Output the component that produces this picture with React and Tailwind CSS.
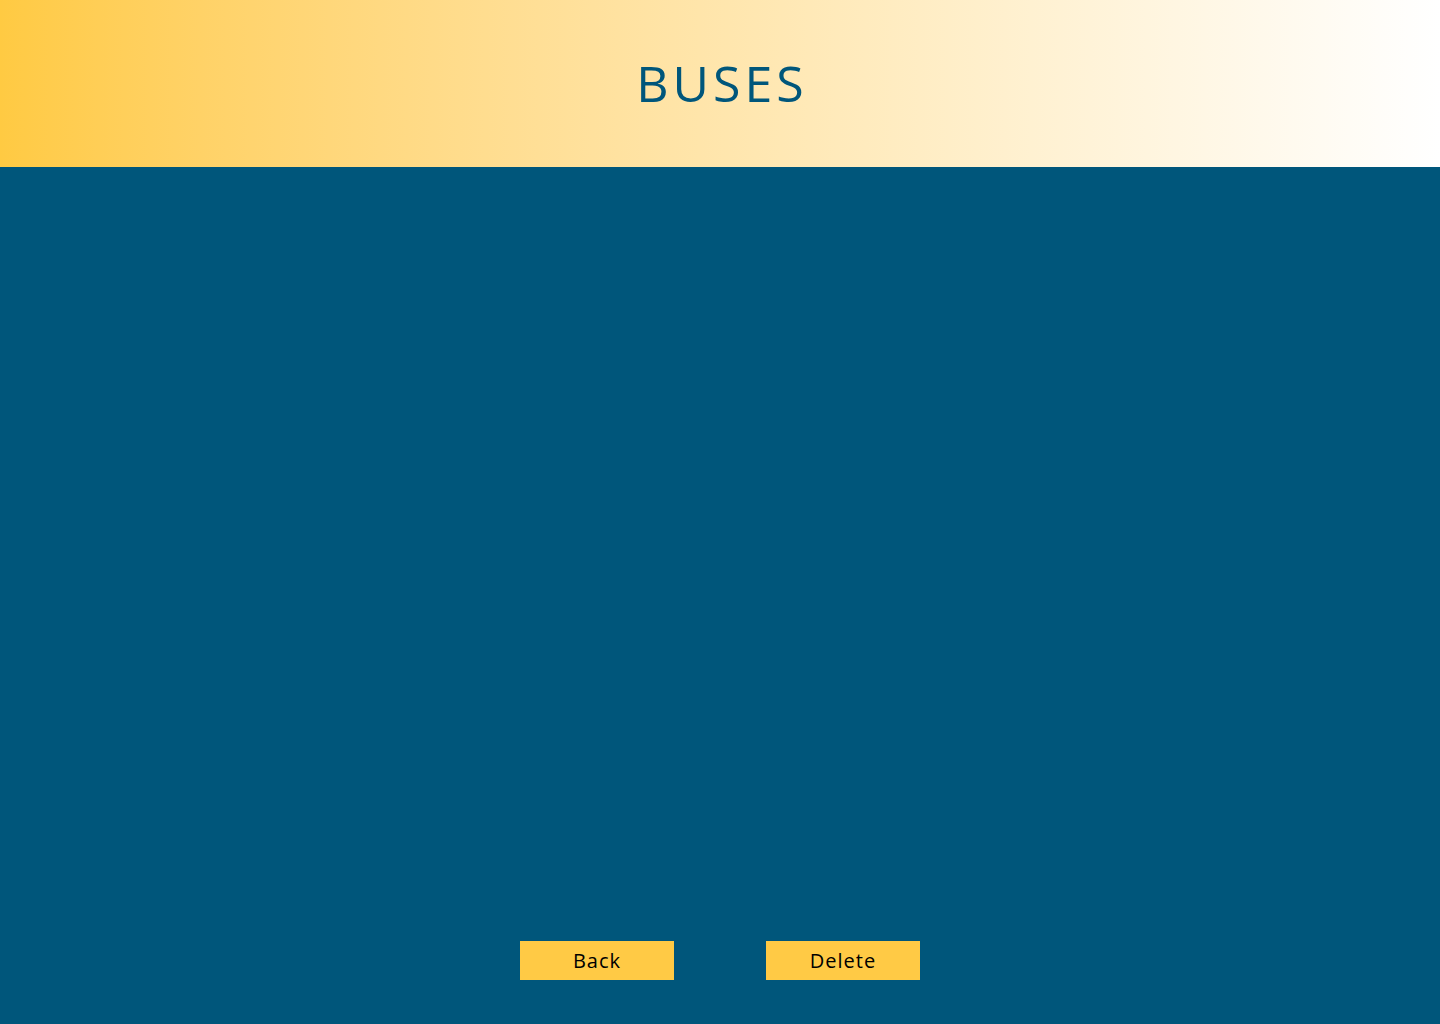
export default function App() {
  return (
    <div className="flex min-h-screen flex-col" style={{ fontFamily: '"Open Sans", "Noto Sans", sans-serif' }}>
      <header className="flex h-[167px] items-center justify-center bg-gradient-to-r from-[#ffca42] to-white">
        <h1 className="pl-[4px] text-[50px] font-normal tracking-[4px] text-[#00567b]">BUSES</h1>
      </header>
      <main className="flex flex-1 flex-col justify-end bg-[#00567b] pb-[44px]">
        <div className="flex justify-center gap-[92px]">
          <button className="h-[39px] w-[154px] bg-[#ffca45] text-[20px] tracking-[1px] text-black">Back</button>
          <button className="h-[39px] w-[154px] bg-[#ffca45] text-[20px] tracking-[1px] text-black">Delete</button>
        </div>
      </main>
    </div>
  );
}
